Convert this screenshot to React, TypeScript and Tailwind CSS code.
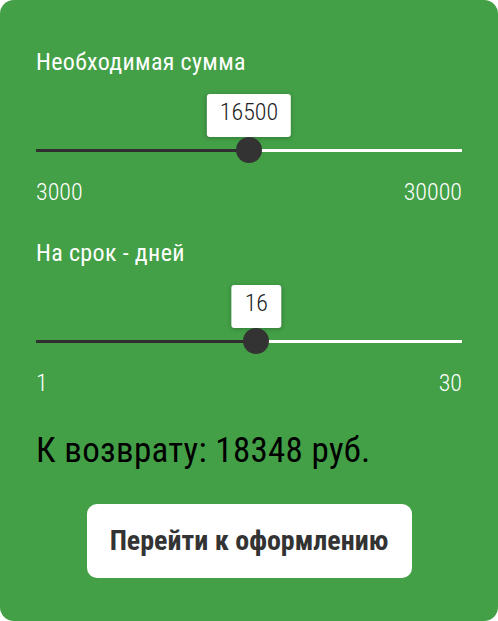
import React from "react";

type SliderProps = {
  min: number;
  max: number;
  value: number;
};

function RangeSlider({ min, max, value }: SliderProps) {
  const pct = ((value - min) / (max - min)) * 100;

  return (
    <div>
      <div className="relative h-[69px]">
        {/* value bubble */}
        <div
          className="absolute top-0 h-[43px] -translate-x-1/2 rounded-[3px] bg-white px-[13px] pt-[4px] text-[24px] leading-[28px] font-light text-[#222] shadow-[0_1px_4px_rgba(0,0,0,0.25)]"
          style={{ left: `${pct}%` }}
        >
          {value}
        </div>
        {/* track */}
        <div className="absolute inset-x-0 top-[55px] flex h-[3px]">
          <div className="h-full bg-[#2f2f2f]" style={{ width: `${pct}%` }} />
          <div className="h-full flex-1 bg-white" />
        </div>
        {/* thumb */}
        <div
          className="absolute top-[43px] h-[26px] w-[26px] -translate-x-1/2 rounded-full bg-[#333]"
          style={{ left: `${pct}%` }}
        />
      </div>
      <div className="mt-[15px] flex justify-between text-[24px] leading-[28px] font-light text-white">
        <span>{min}</span>
        <span>{max}</span>
      </div>
    </div>
  );
}

export default function App() {
  const [amount] = React.useState(16500);
  const [days] = React.useState(16);

  return (
    <div className="h-[621px] w-[498px] bg-white font-['Roboto_Condensed',sans-serif]">
      <div className="flex h-full flex-col rounded-[14px] bg-[#43a047] px-9 pt-12">
        <h3 className="text-[24px] leading-[28px] font-normal tracking-[0.35px] text-white">
          Необходимая сумма
        </h3>
        <div className="mt-[18px]">
          <RangeSlider min={3000} max={30000} value={amount} />
        </div>

        <h3 className="mt-[33px] text-[24px] leading-[28px] font-normal tracking-[0.35px] text-white">
          На срок - дней
        </h3>
        <div className="mt-[18px]">
          <RangeSlider min={1} max={30} value={days} />
        </div>

        <div className="mt-[34px] text-[35px] leading-[40px] tracking-[0.3px] text-black">
          К возврату: 18348 руб.
        </div>

        <div className="mt-[33px] flex justify-center">
          <button
            type="button"
            className="h-[74px] w-[325px] rounded-[10px] bg-white text-[28px] font-bold text-[#333]"
          >
            Перейти к оформлению
          </button>
        </div>
      </div>
    </div>
  );
}
